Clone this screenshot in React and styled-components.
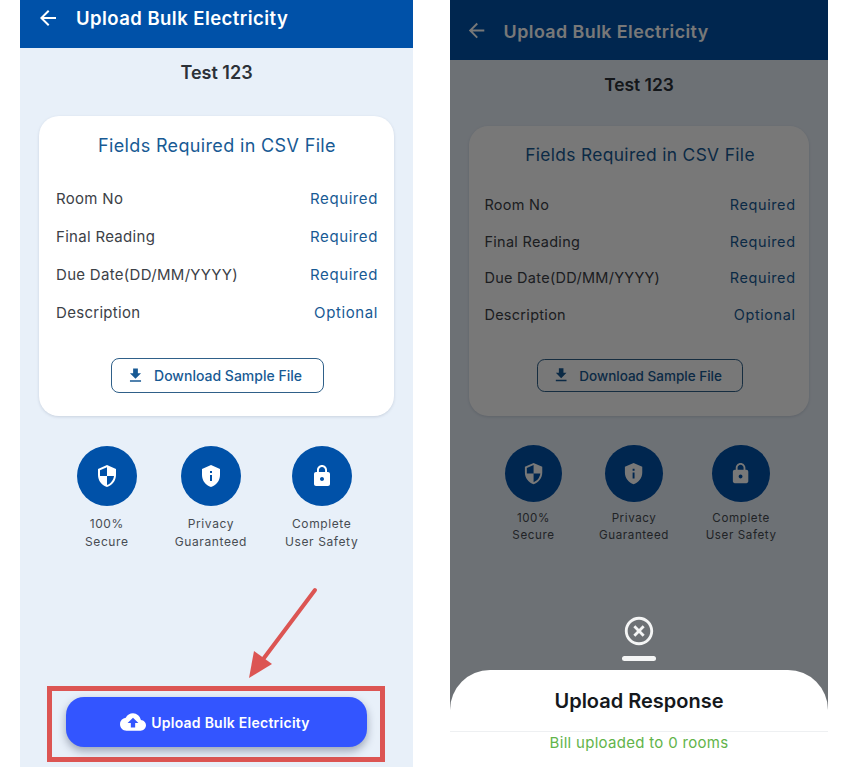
import React from 'react'
import styled, { createGlobalStyle } from 'styled-components'
import { MdArrowBack, MdFileDownload, MdCloudUpload, MdSecurity, MdPrivacyTip, MdLock, MdHighlightOff } from 'react-icons/md'

const fields = [
    { name: 'Room No', rule: 'Required' },
    { name: 'Final Reading', rule: 'Required' },
    { name: 'Due Date(DD/MM/YYYY)', rule: 'Required' },
    { name: 'Description', rule: 'Optional' },
]

const GlobalStyle = createGlobalStyle`
    body {
        margin: 0;
        background: #fff;
        font-family: "Inter", "Liberation Sans", sans-serif;
    }
`

const Page = styled.div`
    display: flex;
    width: 849px;
    height: 768px;
    padding-left: 20px;
    box-sizing: border-box;
    gap: 37px;
    overflow: hidden;
`

const Phone = styled.div`
    --s: ${p => p.$scale};
    position: relative;
    display: flex;
    flex-direction: column;
    width: ${p => p.$width}px;
    height: 767px;
    flex: none;
    background: #e8f0f9;
    overflow: hidden;
`

const Header = styled.div`
    display: flex;
    align-items: center;
    flex: none;
    gap: calc(var(--s) * 16px);
    height: ${p => p.$height}px;
    padding: ${p => p.$pad};
    box-sizing: border-box;
    background: #0051a8;
    color: #fff;
    font-size: calc(var(--s) * 18.5px);
    font-weight: 600;
    letter-spacing: 0.45px;
    svg { font-size: calc(var(--s) * 24px); }
`

const Building = styled.div`
    margin-top: ${p => p.$top}px;
    text-align: center;
    color: #2b3138;
    font-size: calc(var(--s) * 18px);
    font-weight: 600;
    line-height: calc(var(--s) * 22px);
`

const Card = styled.div`
    display: flex;
    flex-direction: column;
    margin: ${p => p.$top}px 19px 0;
    padding: ${p => p.$pad};
    background: #fff;
    border-radius: calc(var(--s) * 20px);
    box-shadow: 0 1px 3px rgba(60, 80, 110, 0.18);
`

const CardTitle = styled.div`
    text-align: center;
    color: #185a94;
    font-size: calc(var(--s) * 18px);
    font-weight: 400;
    letter-spacing: 0.35px;
    line-height: calc(var(--s) * 24px);
    margin-bottom: calc(var(--s) * 21px);
`

const Row = styled.div`
    display: flex;
    justify-content: space-between;
    align-items: center;
    height: calc(var(--s) * 38px);
    font-size: calc(var(--s) * 15px);
    letter-spacing: 0.3px;
    color: #3c4147;
`

const Rule = styled.span`
    color: #185a94;
    letter-spacing: 0.6px;
`

const DownloadButton = styled.button`
    display: flex;
    align-items: center;
    justify-content: center;
    align-self: center;
    gap: calc(var(--s) * 9px);
    width: calc(var(--s) * 213px);
    height: calc(var(--s) * 35px);
    margin-top: calc(var(--s) * 27px);
    padding: 0 calc(var(--s) * 6px) 0 0;
    background: #fff;
    border: 1.5px solid #2f6089;
    border-radius: calc(var(--s) * 8px);
    color: #185a94;
    font-family: inherit;
    font-size: calc(var(--s) * 14px);
    font-weight: 500;
    svg { font-size: calc(var(--s) * 19px); }
`

const Badges = styled.div`
    display: flex;
    justify-content: center;
    align-items: flex-start;
    gap: calc(var(--s) * 38px);
    margin-top: calc(var(--s) * 30px);
    padding-left: ${p => p.$left}px;
`

const Badge = styled.div`
    display: flex;
    flex-direction: column;
    align-items: center;
    color: #474c52;
    font-size: calc(var(--s) * 12px);
    letter-spacing: 0.6px;
    line-height: calc(var(--s) * 18px);
    text-align: center;
    white-space: nowrap;
`

const BadgeIcon = styled.div`
    display: flex;
    align-items: center;
    justify-content: center;
    width: calc(var(--s) * 60px);
    height: calc(var(--s) * 60px);
    margin-bottom: ${p => p.$gap}px;
    border-radius: 50%;
    background: #0051a8;
    color: #fff;
    font-size: calc(var(--s) * 24px);
`

const Footer = styled.div`
    margin-top: auto;
    margin-left: 27px;
    margin-right: 28px;
    margin-bottom: 5px;
    padding: 6px 13px 10px 14px;
    border: 5px solid #dc5553;
`

const UploadButton = styled.button`
    display: flex;
    align-items: center;
    justify-content: center;
    gap: 5px;
    width: 100%;
    height: 50px;
    padding: 0 3px 0 0;
    border: 0;
    border-radius: 18px;
    background: #3355ff;
    color: #fff;
    font-family: inherit;
    font-size: 14px;
    font-weight: 600;
    letter-spacing: 0.25px;
    box-shadow: 0 4px 8px rgba(40, 50, 80, 0.4);
    svg { font-size: 26px; }
`

const Pointer = styled.svg`
    position: absolute;
    left: 222px;
    top: 584px;
`

const Dim = styled.div`
    position: absolute;
    inset: 0;
    display: flex;
    flex-direction: column;
    align-items: center;
    justify-content: flex-end;
    background: rgba(0, 0, 0, 0.53);
`

const CloseIcon = styled.div`
    display: flex;
    color: #f4f5f5;
    font-size: 34px;
    margin-bottom: 1px;
`

const Handle = styled.div`
    width: 34px;
    height: 5px;
    margin: 7px 0 9px;
    border-radius: 3px;
    background: #f4f5f5;
`

const Sheet = styled.div`
    display: flex;
    flex-direction: column;
    align-items: center;
    align-self: stretch;
    height: 97px;
    background: #fff;
    border-radius: 40px 40px 0 0;
`

const SheetTitle = styled.div`
    display: flex;
    align-items: center;
    justify-content: center;
    align-self: stretch;
    height: 61px;
    border-bottom: 1px solid #eef0f2;
    color: #15181c;
    font-size: 20px;
    font-weight: 600;
`

const SheetMessage = styled.div`
    margin-top: 1px;
    color: #62b44a;
    font-size: 15px;
    letter-spacing: 0.3px;
    line-height: 20px;
`

const Content = ({ wide }) => {
    const labelGap = wide ? 9 : 7.5
    return (
        <>
            <Header $height={wide ? 48 : 60} $pad={wide ? '0 16px 12px' : '2px 15px 0'}>
                <MdArrowBack />
                <span>Upload Bulk Electricity</span>
            </Header>
            <Building $top={wide ? 14 : 14}>Test 123</Building>
            <Card $top={wide ? 32 : 31} $pad={wide ? '18px 16px 23px 17px' : '16.4px 13.4px 23.2px 15.4px'}>
                <CardTitle>Fields Required in CSV File</CardTitle>
                {fields.map(f => (
                    <Row key={f.name}>
                        <span>{f.name}</span>
                        <Rule>{f.rule}</Rule>
                    </Row>
                ))}
                <DownloadButton>
                    <MdFileDownload />
                    Download Sample File
                </DownloadButton>
            </Card>
            <Badges $left={wide ? 2 : 3}>
                <Badge>
                    <BadgeIcon $gap={labelGap}><MdSecurity /></BadgeIcon>
                    100%<br />Secure
                </Badge>
                <Badge>
                    <BadgeIcon $gap={labelGap}><MdPrivacyTip /></BadgeIcon>
                    Privacy<br />Guaranteed
                </Badge>
                <Badge>
                    <BadgeIcon $gap={labelGap}><MdLock /></BadgeIcon>
                    Complete<br />User Safety
                </Badge>
            </Badges>
        </>
    )
}

export default function App() {
    return (
        <Page>
            <GlobalStyle />
            <Phone $width={393} $scale={1}>
                <Content wide />
                <Footer>
                    <UploadButton>
                        <MdCloudUpload />
                        Upload Bulk Electricity
                    </UploadButton>
                </Footer>
                <Pointer width="80" height="100" viewBox="0 0 80 100">
                    <line x1="73" y1="6" x2="16" y2="82" stroke="#dc5553" strokeWidth="4" strokeLinecap="round" />
                    <polygon points="7,94 12,67 30,80" fill="#dc5553" />
                </Pointer>
            </Phone>
            <Phone $width={378} $scale={0.965}>
                <Content />
                <Dim>
                    <CloseIcon><MdHighlightOff /></CloseIcon>
                    <Handle />
                    <Sheet>
                        <SheetTitle>Upload Response</SheetTitle>
                        <SheetMessage>Bill uploaded to 0 rooms</SheetMessage>
                    </Sheet>
                </Dim>
            </Phone>
        </Page>
    )
}
